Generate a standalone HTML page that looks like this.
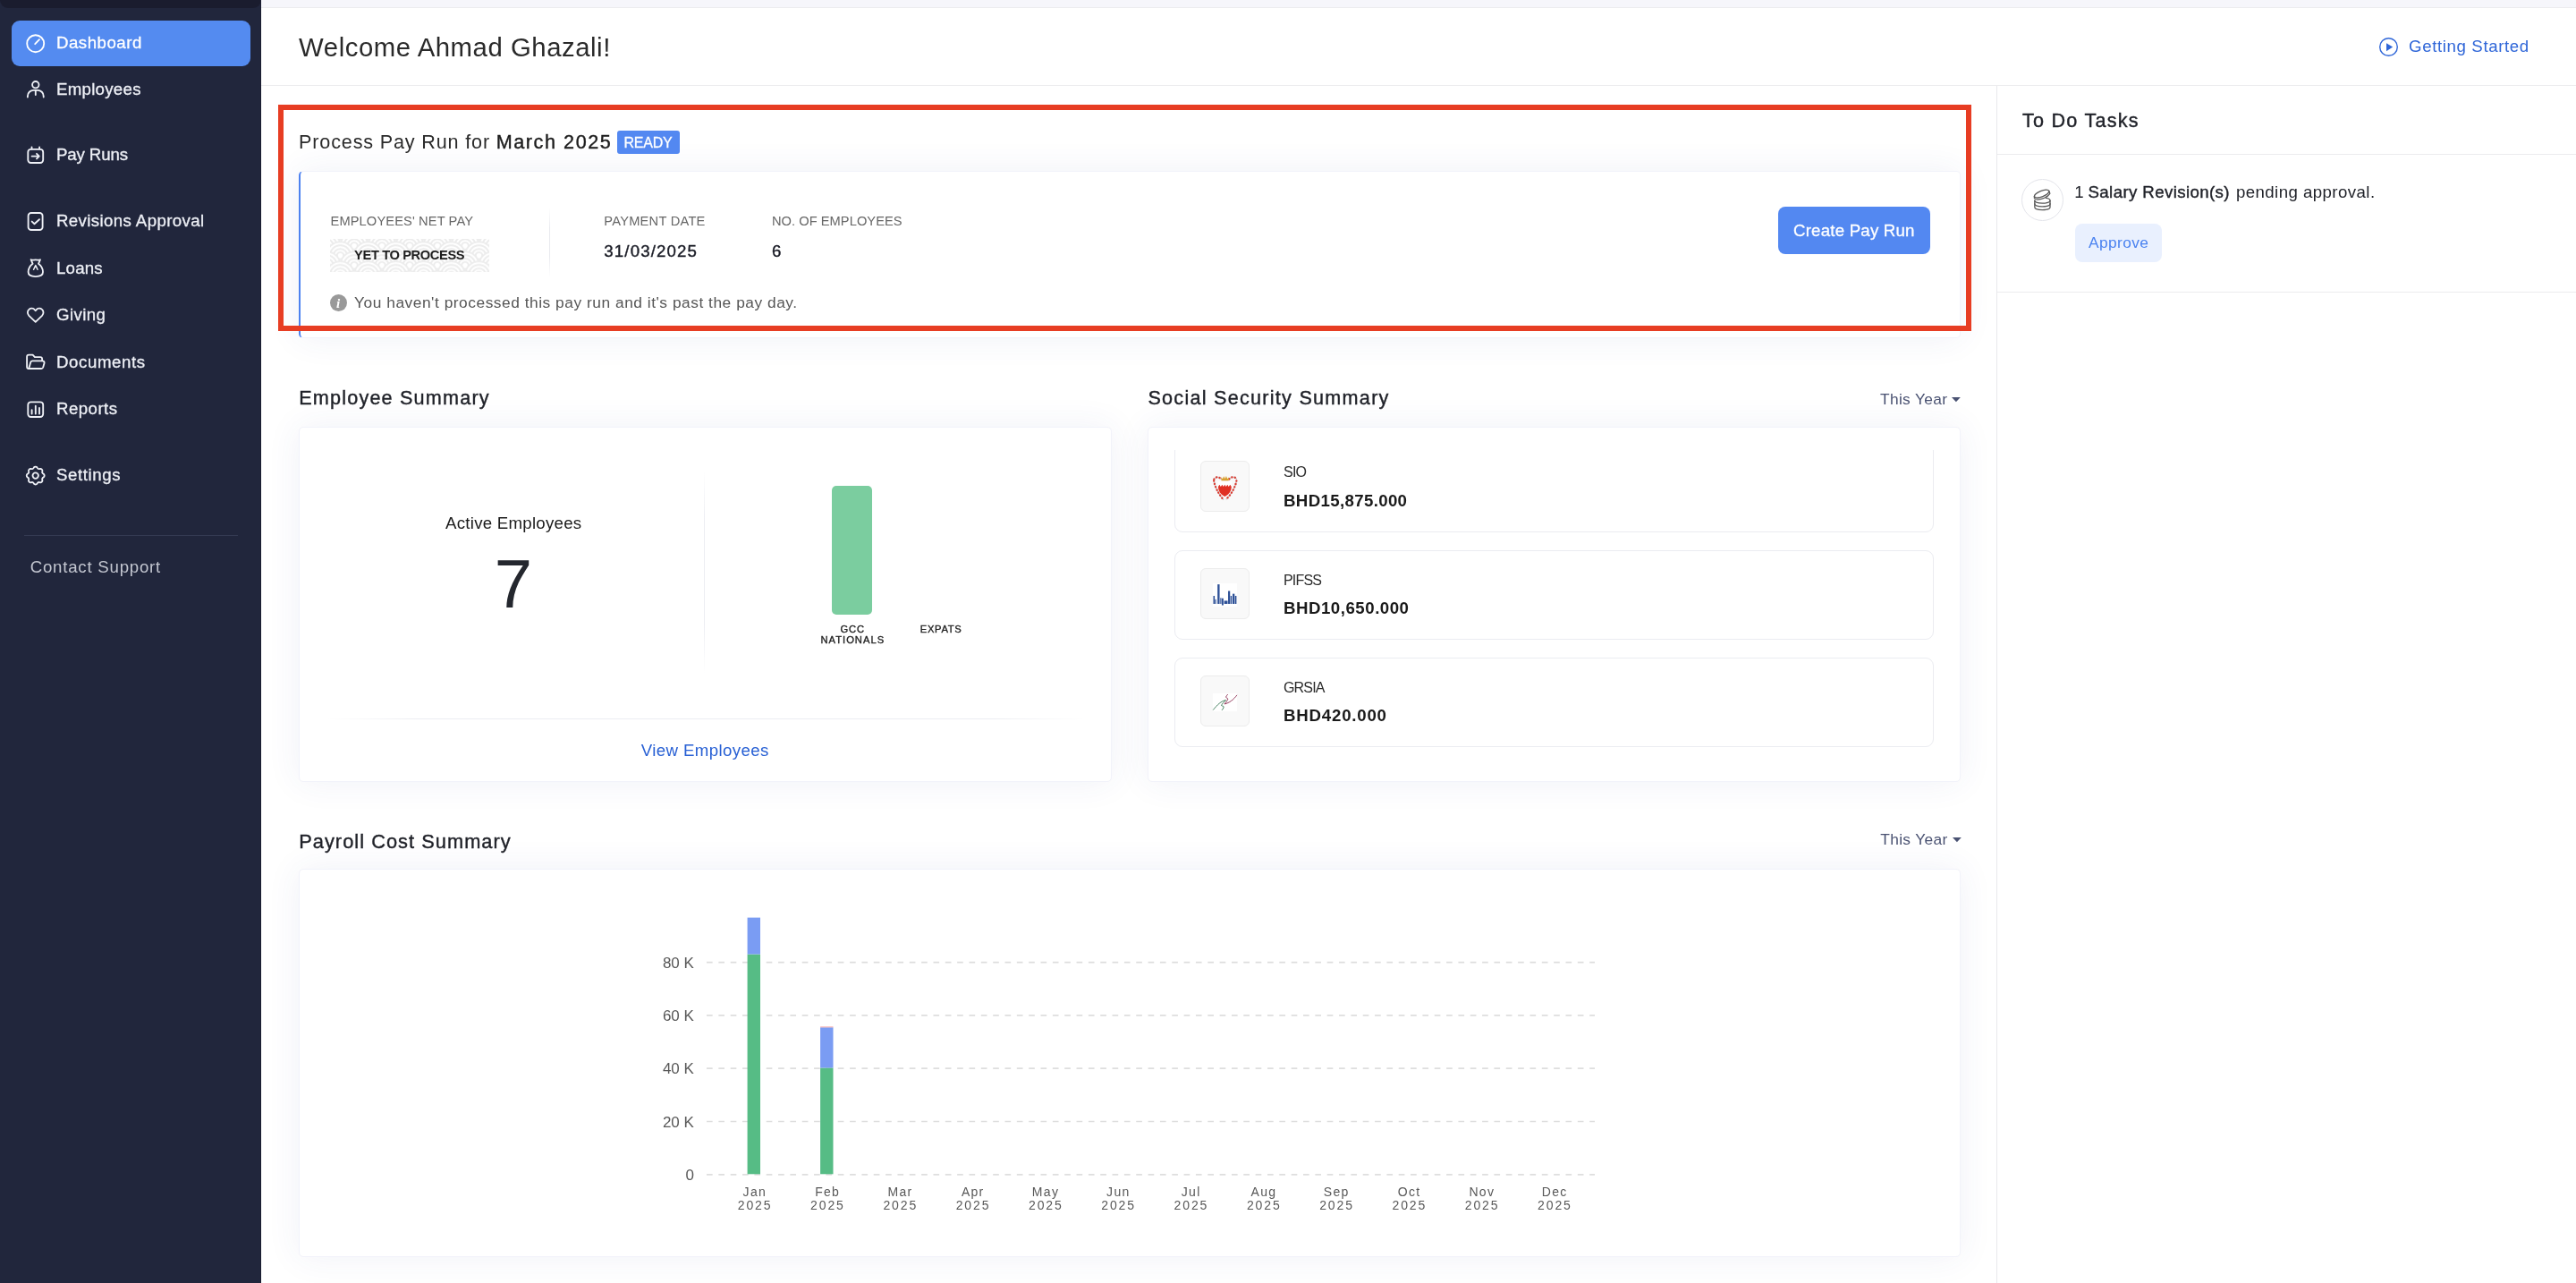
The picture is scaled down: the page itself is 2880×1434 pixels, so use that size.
<!DOCTYPE html>
<html lang="en">
<head>
<meta charset="utf-8">
<title>Dashboard | Payroll</title>
<style>
html,body{margin:0;padding:0;}
body{width:2880px;height:1434px;overflow:hidden;background:#fff;font-family:"Liberation Sans",sans-serif;}
#txt{position:absolute;left:0;top:0;width:2880px;height:1434px;will-change:transform;}
#app{position:relative;width:2880px;height:1434px;overflow:hidden;}
.abs{position:absolute;box-sizing:border-box;}
.t{position:absolute;white-space:nowrap;line-height:1;}
.t b{font-weight:700;}
.card{position:absolute;box-sizing:border-box;background:#fff;border:1px solid #f2f3fa;border-radius:5px;box-shadow:0 0 38px rgba(60,70,150,0.075);}
.row{position:absolute;box-sizing:border-box;width:849px;height:100px;border:1px solid #ebecf1;border-radius:9px;background:#fff;}
.ibox{position:absolute;box-sizing:border-box;width:55px;height:57px;background:#f9f9f9;border:1px solid #ececec;border-radius:6px;}
svg{position:absolute;overflow:visible;}
.ni{fill:none;stroke:#fff;stroke-width:1.850;stroke-linecap:round;stroke-linejoin:round;}
</style>
</head>
<body>
<div id="app">

<!-- sidebar -->
<div class="abs" style="left:0;top:0;width:292px;height:1434px;background:#21263c;"></div>
<div class="abs" style="left:0;top:0;width:291.500px;height:8.700px;background:#1a1c2e;border-radius:0 0 10px 10px;"></div>
<div class="abs" style="left:291px;top:0;width:1px;height:1434px;background:#1b1e31;"></div>
<div class="abs" style="left:13px;top:23px;width:267px;height:51px;background:#548bf0;border-radius:9px;"></div>
<div class="abs" style="left:27px;top:598px;width:239px;height:1px;background:#343a53;"></div>


<!-- sidebar icons -->
<svg style="left:0;top:0;" width="292" height="620" viewBox="0 0 292 620">
 <g class="ni">
  <!-- dashboard -->
  <circle cx="39.7" cy="48.7" r="9.5"/><path d="M39.2 49.2L44 44.2"/>
  <!-- employees -->
  <g stroke="#eef0f6">
  <circle cx="39.8" cy="94.7" r="3.7"/><path d="M30.9 108.6v-1.2a6.6 6.6 0 0 1 6.6-6.6h4.6a6.6 6.6 0 0 1 6.6 6.6v1.2M39.8 101.6V106"/>
  <!-- pay runs -->
  <rect x="31.3" y="166.8" width="16.9" height="15.2" rx="3.2"/><path d="M35.5 164.4v2.2M44.1 164.4v2.2M35.6 174.6h8M41 171.8l2.8 2.8l-2.8 2.8"/>
  <!-- revisions approval -->
  <rect x="31.6" y="238" width="16" height="19" rx="3.3"/><path d="M35.7 247.6l2.8 2.6l5.5-5"/>
  <!-- loans -->
  <path d="M34.6 290.2c1.6 1 3.2 .2 5.2 .2s3.6 .8 5.2 -.2l-2 4.6c3 2.2 5 5.8 5 9.300c0 3.500-2.400 5-8.200 5s-8.200-1.500-8.200-5c0-3.500 2-7.100 5-9.300z"/>
  <path d="M37.6 301.200l2.200-4.600l2.200 4.600" stroke-width="1.500"/>
  <!-- giving -->
  <path d="M39.700 359.800l-7.300-7c-2-2.100-2-5.100 0-6.900c1.900-1.800 4.900-1.600 6.500 .4l.8 .9l.8-.9c1.600-2 4.600-2.200 6.500-.4c2 1.800 2 4.800 0 6.900z"/>
  <!-- documents -->
  <path d="M32.200 412c-1.200 0-2.100-.9-2.100-2.100v-11.200c0-1.200 .9-2.100 2.100-2.100h4.400l2.300 2.600h6.100c1.200 0 2.100 .9 2.100 2.100v2"/>
  <path d="M32.200 412l2.100-7.200c.3-.9 1.100-1.500 2-1.500h11.200c1.400 0 2.400 1.300 2 2.700l-1.300 4.500c-.3 .9-1.100 1.500-2 1.500z"/>
  <!-- reports -->
  <rect x="31.300" y="449.300" width="16.900" height="16.700" rx="3.200"/><path d="M35.600 458.200v4.400M39.800 453.600v9M44 455.800v6.800"/>
  <!-- settings -->
  <circle cx="39.700" cy="531.600" r="3.200"/>
  <path d="M37.89 522.48A2.4 2.4 0 0 1 41.51 522.48Q42.49 524.86 44.87 523.87A2.4 2.4 0 0 1 47.43 526.43Q46.44 528.81 48.82 529.79A2.4 2.4 0 0 1 48.82 533.41Q46.44 534.39 47.43 536.77A2.4 2.4 0 0 1 44.87 539.33Q42.49 538.34 41.51 540.72A2.4 2.4 0 0 1 37.89 540.72Q36.91 538.34 34.53 539.33A2.4 2.4 0 0 1 31.97 536.77Q32.96 534.39 30.58 533.41A2.4 2.4 0 0 1 30.58 529.79Q32.96 528.81 31.97 526.43A2.4 2.4 0 0 1 34.53 523.87Q36.91 524.86 37.89 522.48Z"/>
  </g>
 </g>
</svg>

<!-- top strip + header -->
<div class="abs" style="left:292px;top:0;width:2588px;height:9px;background:#f6f6fb;border-bottom:1px solid #ececef;"></div>
<div class="abs" style="left:292px;top:9px;width:2588px;height:87px;background:#fff;border-bottom:1px solid #ececee;"></div>

<!-- right panel -->
<div class="abs" style="left:2232px;top:96px;width:648px;height:1338px;background:#fff;border-left:1px solid #e8e8eb;"></div>
<div class="abs" style="left:2233px;top:172px;width:647px;height:1px;background:#ececee;"></div>
<div class="abs" style="left:2233px;top:326px;width:647px;height:1px;background:#ececee;"></div>
<div class="abs" style="left:2260px;top:200px;width:47px;height:47px;border:1px solid #e3e4ea;border-radius:50%;background:#fff;"></div>
<div class="abs" style="left:2320px;top:250px;width:97px;height:43px;background:#e9f0fe;border-radius:8px;"></div>

<!-- pay run card -->
<div class="card" style="left:334px;top:191px;width:1858px;height:187px;border-left:2px solid #4d82f0;border-radius:5px;"></div>
<div class="abs" style="left:690px;top:146px;width:70px;height:26px;background:#5388f1;border-radius:3px;"></div>
<svg style="left:369px;top:267px;" width="178" height="37" viewBox="0 0 178 37">
 <defs><pattern id="sg" x="-4" y="-3" width="31.0" height="21.8" patternUnits="userSpaceOnUse"><circle cx="0.00" cy="-10.90" r="15.5" fill="#fff" stroke="#ececec" stroke-width="1.9"/><circle cx="0.00" cy="-10.90" r="11.6" fill="none" stroke="#ececec" stroke-width="1.9"/><circle cx="0.00" cy="-10.90" r="7.7" fill="none" stroke="#ececec" stroke-width="1.9"/><circle cx="0.00" cy="-10.90" r="3.8" fill="none" stroke="#ececec" stroke-width="1.9"/><circle cx="31.00" cy="-10.90" r="15.5" fill="#fff" stroke="#ececec" stroke-width="1.9"/><circle cx="31.00" cy="-10.90" r="11.6" fill="none" stroke="#ececec" stroke-width="1.9"/><circle cx="31.00" cy="-10.90" r="7.7" fill="none" stroke="#ececec" stroke-width="1.9"/><circle cx="31.00" cy="-10.90" r="3.8" fill="none" stroke="#ececec" stroke-width="1.9"/><circle cx="15.50" cy="0.00" r="15.5" fill="#fff" stroke="#ececec" stroke-width="1.9"/><circle cx="15.50" cy="0.00" r="11.6" fill="none" stroke="#ececec" stroke-width="1.9"/><circle cx="15.50" cy="0.00" r="7.7" fill="none" stroke="#ececec" stroke-width="1.9"/><circle cx="15.50" cy="0.00" r="3.8" fill="none" stroke="#ececec" stroke-width="1.9"/><circle cx="0.00" cy="10.90" r="15.5" fill="#fff" stroke="#ececec" stroke-width="1.9"/><circle cx="0.00" cy="10.90" r="11.6" fill="none" stroke="#ececec" stroke-width="1.9"/><circle cx="0.00" cy="10.90" r="7.7" fill="none" stroke="#ececec" stroke-width="1.9"/><circle cx="0.00" cy="10.90" r="3.8" fill="none" stroke="#ececec" stroke-width="1.9"/><circle cx="31.00" cy="10.90" r="15.5" fill="#fff" stroke="#ececec" stroke-width="1.9"/><circle cx="31.00" cy="10.90" r="11.6" fill="none" stroke="#ececec" stroke-width="1.9"/><circle cx="31.00" cy="10.90" r="7.7" fill="none" stroke="#ececec" stroke-width="1.9"/><circle cx="31.00" cy="10.90" r="3.8" fill="none" stroke="#ececec" stroke-width="1.9"/><circle cx="15.50" cy="21.80" r="15.5" fill="#fff" stroke="#ececec" stroke-width="1.9"/><circle cx="15.50" cy="21.80" r="11.6" fill="none" stroke="#ececec" stroke-width="1.9"/><circle cx="15.50" cy="21.80" r="7.7" fill="none" stroke="#ececec" stroke-width="1.9"/><circle cx="15.50" cy="21.80" r="3.8" fill="none" stroke="#ececec" stroke-width="1.9"/><circle cx="0.00" cy="32.70" r="15.5" fill="#fff" stroke="#ececec" stroke-width="1.9"/><circle cx="0.00" cy="32.70" r="11.6" fill="none" stroke="#ececec" stroke-width="1.9"/><circle cx="0.00" cy="32.70" r="7.7" fill="none" stroke="#ececec" stroke-width="1.9"/><circle cx="0.00" cy="32.70" r="3.8" fill="none" stroke="#ececec" stroke-width="1.9"/><circle cx="31.00" cy="32.70" r="15.5" fill="#fff" stroke="#ececec" stroke-width="1.9"/><circle cx="31.00" cy="32.70" r="11.6" fill="none" stroke="#ececec" stroke-width="1.9"/><circle cx="31.00" cy="32.70" r="7.7" fill="none" stroke="#ececec" stroke-width="1.9"/><circle cx="31.00" cy="32.70" r="3.8" fill="none" stroke="#ececec" stroke-width="1.9"/></pattern></defs>
 <rect width="178" height="37" fill="#fff"/><rect width="178" height="37" fill="url(#sg)"/>
</svg>
<div class="abs" style="left:614px;top:232px;width:1px;height:78px;background:linear-gradient(#fff,#e9eaef 30%,#e9eaef 70%,#fff);"></div>
<div class="abs" style="left:369px;top:329px;width:19px;height:19px;border-radius:50%;background:#999;"></div>
<div class="abs" style="left:1988px;top:231px;width:170px;height:53px;background:#5388f1;border-radius:8px;"></div>

<!-- employee summary card -->
<div class="card" style="left:334px;top:476.5px;width:909px;height:397.500px;"></div>
<div class="abs" style="left:787px;top:525px;width:1px;height:228px;background:linear-gradient(#fff,#ecedf2 25%,#ecedf2 75%,#fff);"></div>
<div class="abs" style="left:366px;top:803px;width:846px;height:1px;background:linear-gradient(90deg,#fff,#ecedf2 12%,#ecedf2 88%,#fff);"></div>
<div class="abs" style="left:930.3px;top:543px;width:44.7px;height:144px;background:#7bcd9f;border-radius:5px;"></div>

<!-- social security card -->
<div class="card" style="left:1283px;top:476.5px;width:909px;height:397px;"></div>
<div class="abs" style="left:1300px;top:503px;width:880px;height:350px;overflow:hidden;">
 <div class="row" style="left:13px;top:-8px;"></div>
 <div class="row" style="left:13px;top:112px;"></div>
 <div class="row" style="left:13px;top:232px;"></div>
</div>
<div class="ibox" style="left:1342px;top:515px;"></div>
<div class="ibox" style="left:1342px;top:635px;"></div>
<div class="ibox" style="left:1342px;top:755px;"></div>
<svg style="left:1330px;top:500px;" width="80" height="100" viewBox="0 0 1026 1283">
 <g fill="none" stroke-linecap="round">
  <path d="M350 458Q395 398 452 455M568 455Q625 398 672 452M348 480Q372 612 482 747M672 480Q642 627 522 747" stroke="#cfcfcf" stroke-width="22" stroke-dasharray="2 44" stroke-dashoffset="23"/>
  <path d="M350 458Q395 398 452 455M568 455Q625 398 672 452M348 480Q372 612 482 747M672 480Q642 627 522 747" stroke="#d93a30" stroke-width="30" stroke-dasharray="2 44"/>
 </g>
 <path d="M408 488H602V560C602 640 545 690 505 708C465 690 408 640 408 560Z" fill="#fff"/>
 <path d="M410 565L428 535L447 565L466 535L485 565L504 535L523 565L542 535L561 565L580 535L600 565C600 640 545 688 505 706C465 688 410 640 410 565Z" fill="#e03124"/>
 <path d="M456 478L450 425L474 452L490 414L508 450L525 412L541 452L566 425L560 478Z" fill="#d9a030"/>
</svg>
<svg style="left:1330px;top:620px;" width="80" height="100" viewBox="0 0 1026 1283">
 <rect x="333" y="410" width="347" height="335" fill="#fff"/>
 <g fill="#2c4f96">
  <rect x="340" y="590" width="20" height="115"/><rect x="365" y="640" width="15" height="65"/>
  <rect x="400" y="425" width="30" height="280"/><rect x="440" y="620" width="15" height="85"/>
  <rect x="461" y="625" width="24" height="100"/><rect x="495" y="660" width="50" height="45"/>
  <rect x="552" y="520" width="28" height="185"/><rect x="586" y="590" width="19" height="115"/>
  <rect x="616" y="560" width="29" height="145"/><rect x="651" y="590" width="21" height="115"/>
 </g>
</svg>
<svg style="left:1330px;top:740px;" width="80" height="100" viewBox="0 0 1026 1283">
 <rect x="333" y="450" width="347" height="255" fill="#fff"/>
 <g fill="none" stroke-width="12" stroke-linecap="round" stroke-linejoin="round">
  <path d="M340 683C400 610 450 560 520 545C490 575 465 600 455 622C470 632 488 630 490 642C485 662 475 678 465 688" stroke="#3c7b58"/>
  <path d="M676 477C630 540 570 585 500 602C520 575 545 550 550 527C540 515 522 512 520 502C525 488 535 478 545 466" stroke="#8d2f52"/>
 </g>
</svg>

<!-- payroll cost card -->
<div class="card" style="left:334px;top:971px;width:1858px;height:434px;"></div>
<svg style="left:0;top:0;" width="2880" height="1434" viewBox="0 0 2880 1434">
 <g stroke="#dedede" stroke-width="1.700" stroke-dasharray="6.67 6.67" fill="none">
  <path d="M790 1075.6H1783M790 1134.9H1783M790 1194.2H1783M790 1253.5H1783M790 1312.8H1783"/>
 </g>
 <rect x="835.6" y="1066.5" width="14.4" height="245.8" fill="#56bc85"/>
 <rect x="835.6" y="1025.6" width="14.4" height="40.9" fill="#7a9cf3"/>
 <rect x="917.1" y="1193.5" width="14.4" height="118.8" fill="#56bc85"/>
 <rect x="917.1" y="1148.3" width="14.4" height="45.2" fill="#7a9cf3"/>
 <rect x="917.1" y="1147.4" width="14.4" height="0.9" fill="#f5a3a3"/>
</svg>


<svg style="left:2250px;top:190px;" width="70" height="70" viewBox="0 0 1283 1283">
 <g fill="none" stroke="#5a5a5a" stroke-width="24" stroke-linecap="round" stroke-linejoin="round">
  <path d="M455 625V760C455 835 770 835 770 760V625"/>
  <path d="M455 625C455 700 770 700 770 625C770 600 740 582 690 575"/>
  <path d="M455 692C455 767 770 767 770 692"/>
  <ellipse cx="598" cy="487" rx="160" ry="60" transform="rotate(-22 598 487)" fill="#fff"/>
  <path d="M447 537V575C470 640 700 590 766 482L750 432"/>
 </g>
</svg>
<svg style="left:2655px;top:37px;" width="32" height="32" viewBox="0 0 32 32">
 <circle cx="15.500" cy="15.500" r="9.800" fill="none" stroke="#2f66d8" stroke-width="1.400"/>
 <path d="M13 11.200V20.200L20.200 15.600Z" fill="#2f66d8"/>
</svg>
<svg style="left:2182px;top:443.800px;" width="10" height="6" viewBox="0 0 10 6"><path d="M0 0H9.800L4.900 5.200Z" fill="#4a5272"/></svg>
<svg style="left:2182.500px;top:935.600px;" width="10" height="6" viewBox="0 0 10 6"><path d="M0 0H9.800L4.900 5.200Z" fill="#4a5272"/></svg>

<!-- red highlight -->
<div class="abs" style="left:311px;top:117px;width:1893px;height:253px;border:6px solid #e73d23;"></div>
<div id="txt">

<!-- text -->
<div class="t" style="left:63.0px;top:39.2px;font-size:18.67px;color:#fff;letter-spacing:0.502px;-webkit-text-stroke:0.3px #fff;">Dashboard</div>
<div class="t" style="left:63.0px;top:91.2px;font-size:18.67px;color:#eef0f6;letter-spacing:0.275px;-webkit-text-stroke:0.3px #eef0f6;">Employees</div>
<div class="t" style="left:63.0px;top:164.2px;font-size:18.67px;color:#eef0f6;letter-spacing:-0.127px;-webkit-text-stroke:0.3px #eef0f6;">Pay Runs</div>
<div class="t" style="left:63.0px;top:238.2px;font-size:18.67px;color:#eef0f6;letter-spacing:0.378px;-webkit-text-stroke:0.3px #eef0f6;">Revisions Approval</div>
<div class="t" style="left:63.0px;top:291.2px;font-size:18.67px;color:#eef0f6;letter-spacing:0.189px;-webkit-text-stroke:0.3px #eef0f6;">Loans</div>
<div class="t" style="left:63.0px;top:343.2px;font-size:18.67px;color:#eef0f6;letter-spacing:0.422px;-webkit-text-stroke:0.3px #eef0f6;">Giving</div>
<div class="t" style="left:63.0px;top:396.2px;font-size:18.67px;color:#eef0f6;letter-spacing:0.605px;-webkit-text-stroke:0.3px #eef0f6;">Documents</div>
<div class="t" style="left:63.0px;top:448.2px;font-size:18.67px;color:#eef0f6;letter-spacing:0.462px;-webkit-text-stroke:0.3px #eef0f6;">Reports</div>
<div class="t" style="left:63.0px;top:522.2px;font-size:18.67px;color:#eef0f6;letter-spacing:0.597px;-webkit-text-stroke:0.3px #eef0f6;">Settings</div>
<div class="t" style="left:33.7px;top:625.2px;font-size:18.67px;color:#c3c6d0;letter-spacing:0.769px;">Contact Support</div>
<div class="t" style="left:334.1px;top:38.2px;font-size:29.33px;color:#2a2a2a;letter-spacing:0.539px;">Welcome Ahmad Ghazali!</div>
<div class="t" style="left:2693.0px;top:43.2px;font-size:18.67px;color:#2f66d8;letter-spacing:0.623px;">Getting Started</div>
<div class="t" style="left:334.1px;top:148.2px;font-size:21.6px;color:#2b2b2b;letter-spacing:0.832px;">Process Pay Run for</div>
<div class="t" style="left:554.7px;top:148.2px;font-size:21.6px;color:#1c1c1c;letter-spacing:1.573px;-webkit-text-stroke:0.4px #1c1c1c;">March 2025</div>
<div class="t" style="left:697.4px;top:152.2px;font-size:16px;color:#fff;letter-spacing:-0.181px;-webkit-text-stroke:0.3px #fff;">READY</div>
<div class="t" style="left:369.5px;top:240.2px;font-size:14.67px;color:#676767;letter-spacing:0.114px;">EMPLOYEES' NET PAY</div>
<div class="t" style="left:396.1px;top:278.2px;font-size:14.67px;color:#1d1d1d;font-weight:700;letter-spacing:-0.379px;">YET TO PROCESS</div>
<div class="t" style="left:675.3px;top:240.2px;font-size:14.67px;color:#676767;letter-spacing:0.238px;">PAYMENT DATE</div>
<div class="t" style="left:675.3px;top:272.2px;font-size:18.67px;color:#1a1c26;letter-spacing:1.147px;-webkit-text-stroke:0.4px #1a1c26;">31/03/2025</div>
<div class="t" style="left:862.9px;top:240.2px;font-size:14.67px;color:#676767;letter-spacing:0.049px;">NO. OF EMPLOYEES</div>
<div class="t" style="left:863.0px;top:272.2px;font-size:18.67px;color:#1a1c26;-webkit-text-stroke:0.4px #1a1c26;">6</div>
<div class="t" style="left:396.1px;top:330.2px;font-size:17.33px;color:#555;letter-spacing:0.529px;">You haven't processed this pay run and it's past the pay day.</div>
<div class="t" style="left:2005.0px;top:249.2px;font-size:18.67px;color:#fff;letter-spacing:0.212px;-webkit-text-stroke:0.3px #fff;">Create Pay Run</div>
<div class="t" style="left:378.2px;top:332.2px;font-size:15px;color:#fff;font-weight:700;font-family:'Liberation Serif',serif;transform:translateX(-50%);margin-left:0.00px;font-style:italic;">i</div>
<div class="t" style="left:2261.0px;top:124.2px;font-size:21.6px;color:#1f2128;letter-spacing:1.228px;-webkit-text-stroke:0.4px #1f2128;">To Do Tasks</div>
<div class="t" style="left:2319.3px;top:206.2px;font-size:18.67px;color:#1f2128;">1</div>
<div class="t" style="left:2334.5px;top:206.2px;font-size:18.67px;color:#1f2128;letter-spacing:0.390px;-webkit-text-stroke:0.4px #1f2128;">Salary Revision(s)</div>
<div class="t" style="left:2499.9px;top:206.2px;font-size:18.67px;color:#1f2128;letter-spacing:0.429px;">pending approval.</div>
<div class="t" style="left:2335.0px;top:263.2px;font-size:17.33px;color:#4a82f0;letter-spacing:0.409px;">Approve</div>
<div class="t" style="left:334.2px;top:434.2px;font-size:21.6px;color:#1f2128;letter-spacing:1.199px;-webkit-text-stroke:0.4px #1f2128;">Employee Summary</div>
<div class="t" style="left:574.1px;top:576.2px;font-size:18.67px;color:#1a1a1a;letter-spacing:0.261px;transform:translateX(-50%);margin-left:0.13px;">Active Employees</div>
<div class="t" style="left:573.8px;top:615.2px;font-size:76px;color:#24272e;transform:translateX(-50%);margin-left:0.00px;">7</div>
<div class="t" style="left:952.8px;top:698.2px;font-size:11.2px;color:#222;letter-spacing:0.963px;-webkit-text-stroke:0.35px #222;transform:translateX(-50%);margin-left:0.48px;">GCC</div>
<div class="t" style="left:952.8px;top:710.2px;font-size:11.2px;color:#222;letter-spacing:1.001px;-webkit-text-stroke:0.35px #222;transform:translateX(-50%);margin-left:0.50px;">NATIONALS</div>
<div class="t" style="left:1051.8px;top:698.2px;font-size:11.2px;color:#222;letter-spacing:0.683px;-webkit-text-stroke:0.35px #222;transform:translateX(-50%);margin-left:0.34px;">EXPATS</div>
<div class="t" style="left:788.0px;top:830.2px;font-size:18.67px;color:#2860d4;letter-spacing:0.379px;transform:translateX(-50%);margin-left:0.19px;">View Employees</div>
<div class="t" style="left:1283.4px;top:434.2px;font-size:21.6px;color:#1f2128;letter-spacing:1.263px;-webkit-text-stroke:0.4px #1f2128;">Social Security Summary</div>
<div class="t" style="left:2102.0px;top:438.2px;font-size:17.33px;color:#4a5272;letter-spacing:0.331px;">This Year</div>
<div class="t" style="left:1435.0px;top:520.2px;font-size:16px;color:#2a2a2a;letter-spacing:-0.781px;">SIO</div>
<div class="t" style="left:1435.0px;top:551.2px;font-size:18.67px;color:#1a1a1a;font-weight:700;letter-spacing:0.350px;">BHD15,875.000</div>
<div class="t" style="left:1435.0px;top:641.2px;font-size:16px;color:#2a2a2a;letter-spacing:-0.809px;">PIFSS</div>
<div class="t" style="left:1435.0px;top:671.2px;font-size:18.67px;color:#1a1a1a;font-weight:700;letter-spacing:0.517px;">BHD10,650.000</div>
<div class="t" style="left:1435.0px;top:761.2px;font-size:16px;color:#2a2a2a;letter-spacing:-0.824px;">GRSIA</div>
<div class="t" style="left:1435.0px;top:791.2px;font-size:18.67px;color:#1a1a1a;font-weight:700;letter-spacing:0.793px;">BHD420.000</div>
<div class="t" style="left:334.2px;top:930.2px;font-size:21.8px;color:#1f2128;letter-spacing:1.036px;-webkit-text-stroke:0.4px #1f2128;">Payroll Cost Summary</div>
<div class="t" style="left:2102.3px;top:930.2px;font-size:17.33px;color:#4a5272;letter-spacing:0.331px;">This Year</div>
<div class="t" style="left:775.9px;top:1068.2px;font-size:17px;color:#585858;transform:translateX(-100%);margin-left:0.00px;">80 K</div>
<div class="t" style="left:775.9px;top:1127.2px;font-size:17px;color:#585858;transform:translateX(-100%);margin-left:0.00px;">60 K</div>
<div class="t" style="left:775.9px;top:1186.2px;font-size:17px;color:#585858;transform:translateX(-100%);margin-left:0.00px;">40 K</div>
<div class="t" style="left:775.9px;top:1246.2px;font-size:17px;color:#585858;transform:translateX(-100%);margin-left:0.00px;">20 K</div>
<div class="t" style="left:775.9px;top:1305.2px;font-size:17px;color:#585858;transform:translateX(-100%);margin-left:0.00px;">0</div>
<div class="t" style="left:843.2px;top:1325.2px;font-size:14px;color:#585858;letter-spacing:1.300px;transform:translateX(-50%);margin-left:0.65px;">Jan</div>
<div class="t" style="left:843.2px;top:1340.2px;font-size:14px;color:#585858;letter-spacing:1.881px;transform:translateX(-50%);margin-left:0.94px;">2025</div>
<div class="t" style="left:924.5px;top:1325.2px;font-size:14px;color:#585858;letter-spacing:1.300px;transform:translateX(-50%);margin-left:0.65px;">Feb</div>
<div class="t" style="left:924.5px;top:1340.2px;font-size:14px;color:#585858;letter-spacing:1.881px;transform:translateX(-50%);margin-left:0.94px;">2025</div>
<div class="t" style="left:1005.8px;top:1325.2px;font-size:14px;color:#585858;letter-spacing:1.300px;transform:translateX(-50%);margin-left:0.65px;">Mar</div>
<div class="t" style="left:1005.8px;top:1340.2px;font-size:14px;color:#585858;letter-spacing:1.881px;transform:translateX(-50%);margin-left:0.94px;">2025</div>
<div class="t" style="left:1087.1px;top:1325.2px;font-size:14px;color:#585858;letter-spacing:1.300px;transform:translateX(-50%);margin-left:0.65px;">Apr</div>
<div class="t" style="left:1087.1px;top:1340.2px;font-size:14px;color:#585858;letter-spacing:1.881px;transform:translateX(-50%);margin-left:0.94px;">2025</div>
<div class="t" style="left:1168.4px;top:1325.2px;font-size:14px;color:#585858;letter-spacing:1.300px;transform:translateX(-50%);margin-left:0.65px;">May</div>
<div class="t" style="left:1168.4px;top:1340.2px;font-size:14px;color:#585858;letter-spacing:1.881px;transform:translateX(-50%);margin-left:0.94px;">2025</div>
<div class="t" style="left:1249.7px;top:1325.2px;font-size:14px;color:#585858;letter-spacing:1.300px;transform:translateX(-50%);margin-left:0.65px;">Jun</div>
<div class="t" style="left:1249.7px;top:1340.2px;font-size:14px;color:#585858;letter-spacing:1.881px;transform:translateX(-50%);margin-left:0.94px;">2025</div>
<div class="t" style="left:1331.0px;top:1325.2px;font-size:14px;color:#585858;letter-spacing:1.300px;transform:translateX(-50%);margin-left:0.65px;">Jul</div>
<div class="t" style="left:1331.0px;top:1340.2px;font-size:14px;color:#585858;letter-spacing:1.881px;transform:translateX(-50%);margin-left:0.94px;">2025</div>
<div class="t" style="left:1412.3px;top:1325.2px;font-size:14px;color:#585858;letter-spacing:1.300px;transform:translateX(-50%);margin-left:0.65px;">Aug</div>
<div class="t" style="left:1412.3px;top:1340.2px;font-size:14px;color:#585858;letter-spacing:1.881px;transform:translateX(-50%);margin-left:0.94px;">2025</div>
<div class="t" style="left:1493.6px;top:1325.2px;font-size:14px;color:#585858;letter-spacing:1.300px;transform:translateX(-50%);margin-left:0.65px;">Sep</div>
<div class="t" style="left:1493.6px;top:1340.2px;font-size:14px;color:#585858;letter-spacing:1.881px;transform:translateX(-50%);margin-left:0.94px;">2025</div>
<div class="t" style="left:1574.9px;top:1325.2px;font-size:14px;color:#585858;letter-spacing:1.300px;transform:translateX(-50%);margin-left:0.65px;">Oct</div>
<div class="t" style="left:1574.9px;top:1340.2px;font-size:14px;color:#585858;letter-spacing:1.881px;transform:translateX(-50%);margin-left:0.94px;">2025</div>
<div class="t" style="left:1656.2px;top:1325.2px;font-size:14px;color:#585858;letter-spacing:1.300px;transform:translateX(-50%);margin-left:0.65px;">Nov</div>
<div class="t" style="left:1656.2px;top:1340.2px;font-size:14px;color:#585858;letter-spacing:1.881px;transform:translateX(-50%);margin-left:0.94px;">2025</div>
<div class="t" style="left:1737.5px;top:1325.2px;font-size:14px;color:#585858;letter-spacing:1.300px;transform:translateX(-50%);margin-left:0.65px;">Dec</div>
<div class="t" style="left:1737.5px;top:1340.2px;font-size:14px;color:#585858;letter-spacing:1.881px;transform:translateX(-50%);margin-left:0.94px;">2025</div>
</div>
</div>
</body>
</html>
